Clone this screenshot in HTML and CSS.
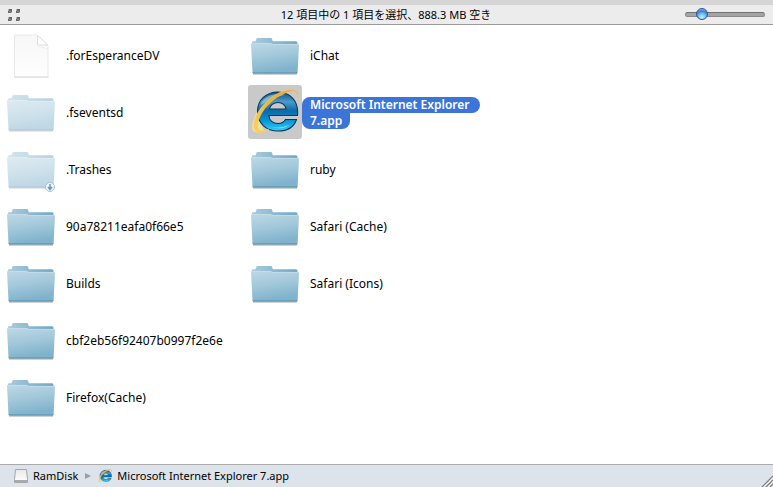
FILE: index.html
```html
<!DOCTYPE html>
<html lang="ja">
<head>
<meta charset="utf-8">
<title>RamDisk</title>
<link rel="stylesheet" href="styles.css">
</head>
<body>
<svg class="defs" aria-hidden="true">
  <defs>
    <linearGradient id="front" x1="0" y1="0" x2=".25" y2="1">
      <stop offset="0" stop-color="#bed8e5"/><stop offset=".5" stop-color="#a2c8da"/><stop offset="1" stop-color="#7fb2cc"/>
    </linearGradient>
    <linearGradient id="back" x1="0" y1="0" x2="1" y2="0">
      <stop offset="0" stop-color="#a9cbdc"/><stop offset=".5" stop-color="#8ab9d1"/><stop offset="1" stop-color="#6fa8c5"/>
    </linearGradient>
    <linearGradient id="paper" x1="0" y1="0" x2="0" y2="1">
      <stop offset="0" stop-color="#f7f7f7"/><stop offset="1" stop-color="#fefefe"/>
    </linearGradient>
    <linearGradient id="blue" x1="0" y1="0" x2="0" y2="1">
      <stop offset="0" stop-color="#124c80"/><stop offset=".25" stop-color="#4a9bcb"/><stop offset=".48" stop-color="#0b6aa8"/><stop offset=".72" stop-color="#0791d4"/><stop offset="1" stop-color="#2fd0fa"/>
    </linearGradient>
    <linearGradient id="gold" x1="0" y1="1" x2="1" y2="0">
      <stop offset="0" stop-color="#f8d55c"/><stop offset=".5" stop-color="#f5b62f"/><stop offset="1" stop-color="#efa52b"/>
    </linearGradient>
    <linearGradient id="disk" x1="0" y1="0" x2="0" y2="1">
      <stop offset="0" stop-color="#e9e9e9"/><stop offset="1" stop-color="#ffffff"/>
    </linearGradient>
  </defs>
  <symbol id="folder" viewBox="0 2 48 48">
    <path d="M2 44h44v1.5H2z" fill="#7d9199" opacity=".8"/>
    <path d="M1 14V13q0-.8 1-.8h2.500L5.500 9.600Q5.800 9 6.500 9h13.500q.8 0 1 .7l.8 2.500H45q1.500 0 1.500 1.500V16H1z" fill="url(#back)"/>
    <path d="M0 15q0-1 1-1h18.500l2 1H47q1 0 1 .800L46.600 43.500q0 .8-.8.800H2.200q-.7 0-.7-.8z" fill="url(#front)"/>
    <path d="M1 14.400h18.500l2 1H47" fill="none" stroke="#d0e3ec" stroke-width=".6"/>
    <path d="M1.500 43.700h45" stroke="#5f97b3" stroke-width=".8"/>
  </symbol>
  <symbol id="document" viewBox="0 0 48 48">
    <path d="M7 46h34.500" stroke="#c9c9c9"/>
    <path d="M7.500 4H30L41 14.500V45.500H7.500z" fill="url(#paper)" stroke="#e9e9e9"/>
    <path d="M30.500 4.500V14H41z" fill="#fff" stroke="#dcdcdc"/>
    <path d="M31 15l10 3" stroke="#eee"/>
  </symbol>
  <symbol id="explorer" viewBox="0 0 48 48">
    <path d="M7 22Q-1 36 2 43q4 3 11-1-5-8-3-20z" fill="#f8e7a0" opacity=".75"/>
    <path fill-rule="evenodd" d="M46.500 27.500C48 13 39 4 27 4S6.500 12 6.500 23.500 15 43 27 43c9 0 16-4 18.500-11.500H34.500c-1.500 2.500-4 4-7.500 4-5 0-9-3-9-8zM18.500 21c.5-3.500 4-6.500 8.500-6.500s7.500 3 8 6.500z" fill="url(#blue)" stroke="#093659" stroke-width="1.100"/>
    <path d="M9.500 17C13 7 25 4 34 7q-10 1-14 5-6 2-10.500 5z" fill="#a7d5ed" opacity=".6"/>
    <path d="M18 38q9 4 20-1-8 6-20 1z" fill="#7ce9ff"/>
    <path d="M46 12C50 5 45 1 37 2 23 4 7 19 3.500 33 1 44 7 49 18 41 10 45 5 43 7 34 10 22 22 9 37 4c8-2.500 11 1 9 8z" fill="url(#gold)" stroke="#f9cf68" stroke-width=".5"/>
  </symbol>
</svg>

<header class="toolbar">
  <svg class="grip" viewBox="0 0 14 14" aria-hidden="true">
    <path d="M1 1h4v4H1zM9 1h4v4H9zM1 9h4v4H1zM9 9h4v4H9z" fill="#b0b0b0"/>
    <path d="M2 1h3v3H4v1H1V3h1zM10 1h3v3h-1v1H9V3h1zM2 9h3v3H4v1H1v-2h1zM10 9h3v3h-1v1H9v-2h1z" fill="#686868"/>
    <path d="M2 3h2v1H2zM10 3h2v1h-2zM2 11h2v1H2zM10 11h2v1h-2z" fill="#8d8d8d"/>
  </svg>
  <p class="status">12 項目中の 1 項目を選択、888.3 MB 空き</p>
  <input class="zoom" type="range" min="0" max="100" value="15" aria-label="アイコンサイズ">
</header>

<main class="content">
  <ul class="files">
    <li class="file"><span class="icon"><svg><use href="#document"/></svg></span><span class="name">.forEsperanceDV</span></li>
    <li class="file"><span class="icon faded"><svg><use href="#folder"/></svg></span><span class="name">.fseventsd</span></li>
    <li class="file"><span class="icon faded"><svg><use href="#folder"/></svg><svg class="badge" viewBox="0 0 10 10"><circle cx="5" cy="5" r="4.500" fill="#f4f7fa" stroke="#b3bcc4"/><path d="M5 2v5M3 5l2 2.500L7 5" fill="none" stroke="#5c9bd0" stroke-width="1.500"/></svg></span><span class="name">.Trashes</span></li>
    <li class="file"><span class="icon"><svg><use href="#folder"/></svg></span><span class="name">90a78211eafa0f66e5</span></li>
    <li class="file"><span class="icon"><svg><use href="#folder"/></svg></span><span class="name">Builds</span></li>
    <li class="file"><span class="icon"><svg><use href="#folder"/></svg></span><span class="name">cbf2eb56f92407b0997f2e6e</span></li>
    <li class="file"><span class="icon"><svg><use href="#folder"/></svg></span><span class="name">Firefox(Cache)</span></li>
    <li class="file"><span class="icon"><svg><use href="#folder"/></svg></span><span class="name">iChat</span></li>
    <li class="file selected"><span class="icon"><svg><use href="#explorer"/></svg></span><span class="name"><span class="line first">Microsoft Internet Explorer</span> <span class="line last">7.app</span></span></li>
    <li class="file"><span class="icon"><svg><use href="#folder"/></svg></span><span class="name">ruby</span></li>
    <li class="file"><span class="icon"><svg><use href="#folder"/></svg></span><span class="name">Safari (Cache)</span></li>
    <li class="file"><span class="icon"><svg><use href="#folder"/></svg></span><span class="name">Safari (Icons)</span></li>
  </ul>
</main>

<footer class="pathbar">
  <svg class="small" viewBox="0 0 14 14" aria-hidden="true"><path d="M1.500.500h11l1 10v3H.500v-3z" fill="url(#disk)" stroke="#a6a6a6"/><path d="M1 11h12v2H1z" fill="#a9a9a9"/></svg>
  <span>RamDisk</span>
  <svg class="arrow" viewBox="0 0 6 6" aria-hidden="true"><path d="M0 0l6 3-6 3z" fill="#9b9fa4"/></svg>
  <svg class="small" aria-hidden="true"><use href="#explorer"/></svg>
  <span>Microsoft Internet Explorer 7.app</span>
  <svg class="resize" viewBox="0 0 12 12" aria-hidden="true"><path d="M1 12L12 1M5 12l7-7M9 12l3-3" stroke="#7b7f84" stroke-width="1.200"/><path d="M2 13L13 2M6 13l7-7" stroke="#fff" stroke-width=".8"/></svg>
</footer>
</body>
</html>
```
FILE: styles.css
```css
* {
  box-sizing: border-box;
}

body {
  margin: 0;
  min-height: 100vh;
  display: flex;
  flex-direction: column;
  background: #fff;
  color: #000;
  font: 12px/16px "Noto Sans", "Noto Sans CJK JP", sans-serif;
}

.defs {
  position: absolute;
  width: 0;
  height: 0;
}

.toolbar {
  display: grid;
  grid-template-columns: 80px 1fr 80px;
  align-items: center;
  height: 25px;
  padding: 0 8px 0 7px;
  border-top: 5px solid #d5d5d5;
  border-bottom: 1px solid #999;
  background: #ececec;
}

.grip {
  width: 14px;
  height: 14px;
}

.status {
  margin: 0;
  text-align: center;
  font-size: 11px;
}

.zoom {
  appearance: none;
  width: 80px;
  height: 12px;
  margin: 0;
  background: transparent;
}

.zoom::-webkit-slider-runnable-track {
  height: 5px;
  border: 1px solid #8b8b8b;
  border-top-color: #707070;
  border-radius: 3px;
  background: #a4a4a4;
}

.zoom::-webkit-slider-thumb {
  appearance: none;
  width: 12px;
  height: 12px;
  margin-top: -5px;
  border: 1px solid #2f568f;
  border-radius: 50%;
  background: radial-gradient(circle at 50% 85%, #c5f3ff 0, #69b5f0 45%, #397fce 65%, #b9d6f3 100%);
}

.content {
  flex: 1;
  padding: 3px 4px;
}

.files {
  display: grid;
  grid-template-rows: repeat(7, 54px);
  grid-auto-flow: column;
  grid-auto-columns: 244px;
  row-gap: 3px;
  margin: 0;
  padding: 0;
  list-style: none;
}

.file {
  display: flex;
  align-items: center;
}

.icon {
  position: relative;
  flex: none;
  height: 54px;
  padding: 3px;
  border-radius: 3px;
}

.icon svg {
  display: block;
  width: 48px;
  height: 48px;
}

.faded use {
  opacity: 0.5;
}

.icon .badge {
  position: absolute;
  right: 3px;
  bottom: 4px;
  width: 10px;
  height: 10px;
}

.name {
  padding: 2px 0 0 8px;
  white-space: nowrap;
}

.selected .icon {
  background: #c9c9c9;
}

.selected .name {
  padding-left: 0;
  color: #fff;
  font-weight: 600;
}

.line {
  display: block;
  width: fit-content;
  padding: 0 8px;
  background: #3b75d9;
}

.first {
  padding-right: 10px;
  border-radius: 8px 8px 8px 0;
}

.last {
  border-radius: 0 0 8px 8px;
}

.pathbar {
  display: flex;
  align-items: center;
  gap: 5px;
  height: 23px;
  padding-left: 14px;
  border-top: 1px solid #aaa;
  background: #dde3ea;
  font-size: 11px;
}

.small {
  width: 14px;
  height: 14px;
}

.arrow {
  width: 6px;
  height: 6px;
  margin: 0 2px;
}

.resize {
  align-self: flex-end;
  width: 12px;
  height: 12px;
  margin-left: auto;
}
```
